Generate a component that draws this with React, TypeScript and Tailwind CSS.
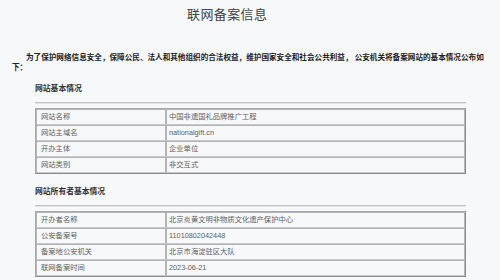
const basic = [
  ['网站名称', '中国非遗国礼品牌推广工程'],
  ['网站主域名', 'nationalgift.cn'],
  ['开办主体', '企业单位'],
  ['网站类别', '非交互式'],
];

const owner = [
  ['开办者名称', '北京炎黄文明非物质文化遗产保护中心'],
  ['公安备案号', '11010802042448'],
  ['备案地公安机关', '北京市海淀驻区大队'],
  ['联网备案时间', '2023-06-21'],
];

const InfoTable = ({ rows }: { rows: string[][] }) => {
  return (
    <table className="w-[431px] border-separate border-spacing-0 border border-[#a8a8a8] border-r-[#8c8c8c] border-b-[#8c8c8c]">
      <tbody>
        {rows.map((row) => (
          <tr key={row[0]}>
            <td className="w-[130px] h-[16px] p-0 pl-[4px] border border-[#b4b4b4] border-b-[#c8c8c8] text-[7.3px] leading-[14px] text-[#606060]">
              {row[0]}
            </td>
            <td className="h-[16px] p-0 pl-[2px] border border-[#b4b4b4] border-b-[#c8c8c8] text-[7.3px] leading-[14px] text-[#606060]">
              {row[1]}
            </td>
          </tr>
        ))}
      </tbody>
    </table>
  );
};

const Section = ({ title, rows, top }: { title: string; rows: string[][]; top: string }) => {
  return (
    <div className={`flex flex-col pl-[35px] ${top}`}>
      <h2 className="text-[7.8px] leading-[10px] font-bold text-[#333]">{title}</h2>
      <div className="mt-[8px] w-[431px] border-t border-[#c4c4c4] border-b border-b-[#e4e4e4]"></div>
      <div className="mt-[4px]">
        <InfoTable rows={rows} />
      </div>
    </div>
  );
};

export default function App() {
  return (
    <div className="w-[500px] h-[280px] overflow-hidden bg-[#f7f8fa] font-['Liberation_Sans','Noto_Sans_CJK_SC',sans-serif]">
      <h1 className="pt-[7px] pl-[187px] text-[13px] leading-[16px] tracking-[0.4px] text-[#444]">
        联网备案信息
      </h1>
      <p className="mt-[30px] pl-[12px] text-[7.6px] leading-[10px] font-bold text-[#222] whitespace-nowrap">
        <span className="pl-[14px]">
          为了保护网络信息安全，保障公民、法人和其他组织的合法权益，维护国家安全和社会公共利益， 公安机关将备案网站的基本情况公布如
        </span>
        <br />
        下：
      </p>
      <Section title="网站基本情况" rows={basic} top="mt-[11px]" />
      <Section title="网站所有者基本情况" rows={owner} top="mt-[13px]" />
    </div>
  );
}
